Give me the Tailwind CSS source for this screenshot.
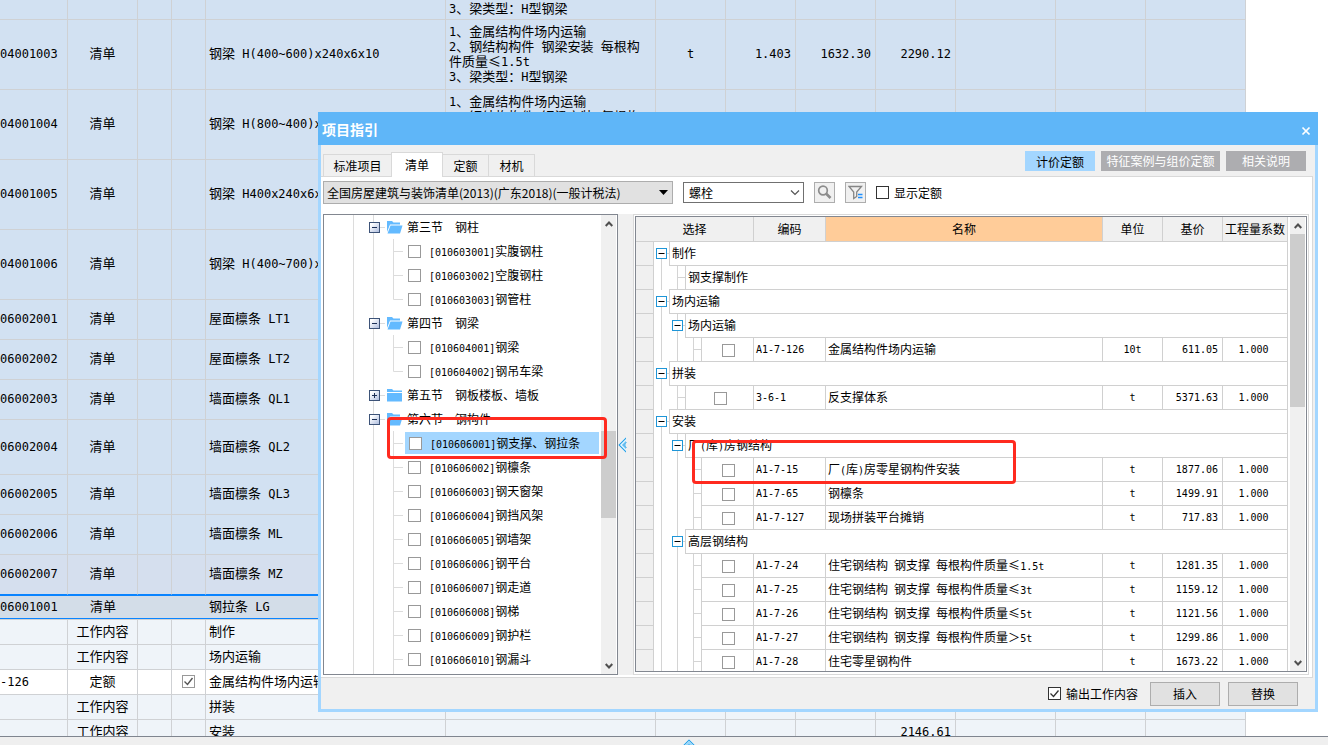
<!DOCTYPE html>
<html lang="zh-CN">
<head>
<meta charset="utf-8">
<meta name="viewport" content="width=device-width, initial-scale=1">
<title>项目指引</title>
<script src="https://cdn.jsdelivr.net/npm/@tailwindcss/browser@4"></script>
</head>
<body class="relative flex h-screen flex-col overflow-hidden bg-white font-['Noto_Sans_CJK_SC',sans-serif] text-xs text-black">

<!-- Bill of quantities -->
<main class="min-h-0 flex-1 overflow-hidden">
  <table class="w-[1246px] table-fixed border-separate border-spacing-0 text-[13px] leading-[15px]">
    <colgroup>
      <col class="w-[68px]"><col class="w-[70px]"><col class="w-[34px]"><col class="w-[34px]"><col class="w-[240px]"><col class="w-[210px]"><col class="w-[70px]"><col class="w-[70px]"><col class="w-[80px]"><col class="w-[80px]"><col class="w-[100px]"><col class="w-[90px]"><col class="w-[100px]">
    </colgroup>
    <tbody id="bill"></tbody>
  </table>
</main>
<div class="flex h-[9px] shrink-0 justify-center overflow-hidden border-t border-[#7f858f] bg-[#efefef] pr-[50px] pl-[100px]">
  <svg class="mt-[2px] h-[10px] w-[12px] shrink-0" viewBox="0 0 12 10" fill="none" aria-hidden="true"><path d="M6 0L0 6v4h12V6z" fill="#9bd6f8"/><path d="M.5 6.500L6 1l5.500 5.500M3 8.500l3-3 3 3" stroke="#2fa3e6"/></svg>
</div>

<!-- Guide dialog -->
<section role="dialog" aria-labelledby="dlg-title" class="absolute top-[112px] right-[10px] bottom-[33px] left-[318px] flex flex-col bg-[#f0f0f0]">
  <header class="flex h-[33px] shrink-0 items-center justify-between bg-[#5fb6f8] pr-[7px] pl-1 text-white">
    <h1 id="dlg-title" class="text-sm font-bold">项目指引</h1>
    <button type="button" aria-label="关闭" class="pt-1"><svg class="h-[10px] w-[10px]" viewBox="0 0 10 10" aria-hidden="true"><path d="M1.5 1.5l7 7M8.5 1.5l-7 7" stroke="#fff" stroke-width="1.700"/></svg></button>
  </header>

  <div class="flex min-h-0 flex-1 flex-col border-x-[3px] border-b-[3px] border-[#a3d6ff]">
    <div class="flex h-[31px] shrink-0 items-end justify-between pr-[9px] pl-[2px]">
      <div class="flex items-end" role="tablist">
        <button type="button" role="tab" class="h-[22px] w-[68px] border border-r-0 border-b-0 border-[#d9d9d9]">标准项目</button>
        <button type="button" role="tab" aria-selected="true" class="z-10 -mb-px h-[25px] w-[52px] border border-b-0 border-[#d9d9d9] bg-white">清单</button>
        <button type="button" role="tab" class="h-[22px] w-[46px] border-t border-r border-[#d9d9d9]">定额</button>
        <button type="button" role="tab" class="h-[22px] w-[46px] border-t border-r border-[#d9d9d9]">材机</button>
      </div>
      <div class="mb-[5px] flex gap-[6px]">
        <button type="button" class="h-5 w-[70px] bg-[#a3d6ff] pt-px">计价定额</button>
        <button type="button" class="h-5 w-[119px] bg-[#adadb0] text-white">特征案例与组价定额</button>
        <button type="button" class="h-5 w-[80px] bg-[#adadb0] text-white">相关说明</button>
      </div>
    </div>

    <div class="mr-[2px] flex min-h-0 flex-1 flex-col border-t border-r border-b border-[#d9d9d9] bg-white pt-1">
      <!-- Filter bar -->
      <div class="flex h-[23px] shrink-0 items-center pl-[2px]">
        <div class="relative h-[23px] w-[350px]">
          <select aria-label="清单库" class="h-full w-full appearance-none border border-[#adadad] bg-[#e1e1e1] pl-[3px]"><option>全国房屋建筑与装饰清单(2013)(广东2018)(一般计税法)</option></select>
          <svg class="pointer-events-none absolute top-[9px] right-[5px] h-[5px] w-[9px]" viewBox="0 0 9 5" aria-hidden="true"><path d="M0 0h9L4.500 5z"/></svg>
        </div>
        <div class="ml-[10px] flex h-[21px] w-[121px] items-center border border-[#707070] bg-white pr-[3px]">
          <input type="text" aria-label="搜索内容" value="螺栓" class="min-w-0 flex-1 pl-[5px] outline-none">
          <button type="button" aria-label="展开"><svg class="h-[6px] w-[10px]" viewBox="0 0 10 6" fill="none" aria-hidden="true"><path d="M1 .5l4 4 4-4" stroke="#555" stroke-width="1.200"/></svg></button>
        </div>
        <button type="button" aria-label="搜索" class="ml-[10px] grid h-[21px] w-[21px] place-items-center border border-[#adadad] bg-[#f0f0f0]"><svg class="h-[15px] w-[15px]" viewBox="0 0 15 15" fill="none" aria-hidden="true"><circle cx="6" cy="5.500" r="4.300" stroke="#8c8c8c" stroke-width="1.700"/><path d="M9 8.500l4.500 4.500" stroke="#8c8c8c" stroke-width="2.600"/></svg></button>
        <button type="button" aria-label="筛选" class="ml-[10px] grid h-[21px] w-[21px] place-items-center border border-[#adadad] bg-[#f0f0f0]"><svg class="h-[15px] w-[15px]" viewBox="0 0 15 15" fill="none" aria-hidden="true"><path d="M1 1.500h12.500L8.700 7v4.500l-3 2V7z" stroke="#858585" stroke-width="1.300"/><path d="M10 9.500h4.500M10 12.500h4.500" stroke="#1e90ff" stroke-width="1.500"/></svg></button>
        <label class="ml-[10px] flex items-center gap-[5px]"><input type="checkbox" class="h-[13px] w-[13px] appearance-none border border-[#333] bg-white">显示定额</label>
      </div>

      <div class="mt-[10px] mb-[2px] flex min-h-0 flex-1 pl-[2px]">
        <!-- Bill tree -->
        <div class="flex w-[295px] shrink-0 overflow-hidden border border-[#828790]">
          <ul id="tree" role="tree" class="flex min-w-0 flex-1 flex-col overflow-hidden"></ul>
          <div class="mr-px flex w-[15px] flex-col items-center bg-[#f0f0f0]">
            <svg class="mt-[6px] h-[6px] w-[8px] shrink-0" viewBox="0 0 8 6" fill="none" aria-hidden="true"><path d="M.7 5L4 1.500 7.300 5" stroke="#505050" stroke-width="2"/></svg>
            <div class="mt-[204px] h-[87px] w-full shrink-0 bg-[#cdcdcd]"></div>
            <svg class="mt-auto mb-[5px] h-[6px] w-[8px] shrink-0" viewBox="0 0 8 6" fill="none" aria-hidden="true"><path d="M.7 1L4 4.500 7.300 1" stroke="#505050" stroke-width="2"/></svg>
          </div>
        </div>
        <!-- Splitter -->
        <div class="w-[15px] shrink-0 bg-[#f0f0f0] pt-[223px]">
          <svg class="h-4 w-[9px]" viewBox="0 0 9 16" fill="none" aria-hidden="true"><path d="M8 0v16L0 8z" fill="#9bd6f8"/><path d="M8 1L1 8l7 7M8.500 5l-3 3 3 3" stroke="#2fa3e6"/><path d="M8 3L3 8l5 5" stroke="#e6f5fd"/></svg>
        </div>
        <!-- Quota table -->
        <div class="mr-[3px] flex min-w-0 flex-1 border border-[#d9d9d9] bg-white p-px">
          <div class="mb-px flex min-w-0 flex-1 border border-[#828790]">
            <div class="min-w-0 flex-1 overflow-hidden">
              <table class="w-full table-fixed border-separate border-spacing-0">
                <colgroup><col class="w-[18px]"><col class="w-[100px]"><col class="w-[72px]"><col><col class="w-[60px]"><col class="w-[60px]"><col class="w-[65px]"></colgroup>
                <thead>
                  <tr class="h-[25px] bg-[#f0f0f0] *:border-r *:border-b *:border-[#d0d0d0] *:p-0 *:font-normal *:whitespace-nowrap">
                    <th colspan="2">选择</th><th>编码</th><th class="bg-[#ffcc99]">名称</th><th>单位</th><th>基价</th><th>工程量系数</th>
                  </tr>
                </thead>
                <tbody id="quota"></tbody>
              </table>
            </div>
            <div class="mr-px ml-[2px] flex w-[15px] flex-col items-center bg-[#f0f0f0]">
              <svg class="mt-[6px] h-[6px] w-[8px] shrink-0" viewBox="0 0 8 6" fill="none" aria-hidden="true"><path d="M.7 5L4 1.500 7.300 5" stroke="#505050" stroke-width="2"/></svg>
              <div class="mt-[5px] h-[173px] w-full shrink-0 bg-[#cdcdcd]"></div>
              <svg class="mt-auto mb-[5px] h-[6px] w-[8px] shrink-0" viewBox="0 0 8 6" fill="none" aria-hidden="true"><path d="M.7 1L4 4.500 7.300 1" stroke="#505050" stroke-width="2"/></svg>
            </div>
          </div>
        </div>
      </div>
    </div>

    <footer class="flex h-[31px] shrink-0 items-center justify-end gap-2 pr-[17px]">
      <label class="mr-1 flex items-center gap-[5px]">
        <span class="grid *:col-start-1 *:row-start-1"><input type="checkbox" checked class="h-[13px] w-[13px] appearance-none border border-[#333] bg-white"><svg class="pointer-events-none h-[13px] w-[13px]" viewBox="0 0 13 13" fill="none" aria-hidden="true"><path d="M2.500 6.500l3 3L10.500 3.500" stroke="#333" stroke-width="1.300"/></svg></span>输出工作内容
      </label>
      <button type="button" class="h-6 w-[70px] border border-[#adadad] bg-[#e1e1e1]">插入</button>
      <button type="button" class="h-6 w-[70px] border border-[#adadad] bg-[#e1e1e1]">替换</button>
    </footer>
  </div>

  <!-- Highlight frames -->
  <div class="pointer-events-none absolute top-[305px] left-[69px] z-20 h-[42px] w-[220px] rounded-[4px] border-[3px] border-[#ff2a1f]"></div>
  <div class="pointer-events-none absolute top-[328px] left-[374px] z-20 h-[44px] w-[324px] rounded-[4px] border-[3px] border-[#ff2a1f]"></div>
</section>

<script>
const mixed = (s, cls) => s.replace(/[\x20-\x7e]+/g, m => `<span class="${cls}">${m}</span>`);
const big = s => mixed(s, "font-['DejaVu_Sans_Mono',monospace] text-xs leading-none whitespace-pre");
const small = s => mixed(s, "font-['DejaVu_Sans_Mono',monospace] text-[10px] leading-none whitespace-pre");

/* Bill of quantities: [height, colour, code, type, name, feature lines, unit, qty, price, total] */
const B = 'bg-[#d2e1f2]', W = 'bg-[#eff4f9]';
const feat = ['1、金属结构件场内运输', '2、钢结构构件 钢梁安装 每根构', '件质量≤1.5t', '3、梁类型：H型钢梁'];
const bill = [
  ['h-[20px]', B, '', '', '', feat.slice(3)],
  ['h-[70px]', B, '04001003', '清单', '钢梁 H(400~600)x240x6x10', feat, 't', '1.403', '1632.30', '2290.12'],
  ['h-[70px]', B, '04001004', '清单', '钢梁 H(800~400)x', feat],
  ['h-[70px]', B, '04001005', '清单', '钢梁 H400x240x6x'],
  ['h-[70px]', B, '04001006', '清单', '钢梁 H(400~700)x'],
  ['h-[40px]', B, '06002001', '清单', '屋面檩条 LT1'],
  ['h-[40px]', B, '06002002', '清单', '屋面檩条 LT2'],
  ['h-[40px]', B, '06002003', '清单', '墙面檩条 QL1'],
  ['h-[55px]', B, '06002004', '清单', '墙面檩条 QL2'],
  ['h-[40px]', B, '06002005', '清单', '墙面檩条 QL3'],
  ['h-[40px]', B, '06002006', '清单', '墙面檩条 ML'],
  ['h-[40px]', 'bg-[#d5dfee]', '06002007', '清单', '墙面檩条 MZ'],
  ['h-[24px]', 'bg-[#d3dde8]', '06001001', '清单', '钢拉条 LG'],
  ['h-[26px]', W, '', '工作内容', '制作'],
  ['h-[25px]', W, '', '工作内容', '场内运输'],
  ['h-[25px]', 'bg-white', '-126', '定额', '金属结构件场内运输'],
  ['h-[25px]', W, '', '工作内容', '拼装'],
  ['h-[25px]', W, '', '工作内容', '安装', null, '', '', '', '2146.61'],
];
document.getElementById('bill').innerHTML = bill.map((r, i) => {
  const [h, bg, code, type, name, lines, unit = '', qty = '', price = '', total = ''] = r;
  let line = 'border-r border-b border-[#cfd1d4]';
  if (i === 11) line = 'border-r border-b border-r-[#cfd1d4] border-b-[#0a84ff]';
  if (i === 12) line = 'border-y border-[#0a84ff]';
  if (i === 13) line = 'border-t border-r border-b border-[#cfd1d4]';
  const td = (c, t) => `<td class="${line} ${c} overflow-hidden pt-0 pb-1 whitespace-nowrap">${t ? `<div class="${c.includes('lines') ? '' : 'h-[15px]'}">${t}</div>` : ''}</td>`;
  const tick = name === '金属结构件场内运输'
    ? `<span class="grid justify-center pt-[2px] *:col-start-1 *:row-start-1"><input type="checkbox" checked aria-label="${name}" class="h-[13px] w-[13px] appearance-none border border-[#999] bg-white"><svg class="h-[13px] w-[13px]" viewBox="0 0 13 13" fill="none" aria-hidden="true"><path d="M2.500 6.500l3 3L10.500 3" stroke="#555" stroke-width="1.400"/></svg></span>` : '';
  return `<tr class="${h} ${bg}">` + td('px-0', big(code)) + td('px-0 text-center', type) + td('px-0', '') + td('px-0', tick)
    + td('pl-[3px]', name && `<div class="w-0">${big(name)}</div>`)
    + td('lines pl-[3px]', lines ? lines.map(l => `<div class="h-[15px]">${big(l)}</div>`).join('') : '')
    + td('px-0 text-center', big(unit)) + td('pr-1 text-right', big(qty)) + td('pr-1 text-right', big(price)) + td('pr-1 text-right', big(total))
    + td('px-0', '') + td('px-0', '') + td('px-0', '') + '</tr>';
}).join('');

/* Bill tree */
const nodes = [
  ['open', '第三节　钢柱'], ['', '[010603001]实腹钢柱'], ['', '[010603002]空腹钢柱'], ['last', '[010603003]钢管柱'],
  ['open', '第四节　钢梁'], ['', '[010604001]钢梁'], ['last', '[010604002]钢吊车梁'],
  ['closed', '第五节　钢板楼板、墙板'], ['open', '第六节　钢构件'],
  ['sel', '[010606001]钢支撑、钢拉条'], ['', '[010606002]钢檩条'], ['', '[010606003]钢天窗架'], ['', '[010606004]钢挡风架'],
  ['', '[010606005]钢墙架'], ['', '[010606006]钢平台'], ['', '[010606007]钢走道'], ['', '[010606008]钢梯'], ['', '[010606009]钢护栏'], ['', '[010606010]钢漏斗'],
];
const rails = '<path d="M29.500 0v24M49.500 0v24" stroke="#dcdcdc"/>';
document.getElementById('tree').innerHTML = `<svg width="0" height="0" class="absolute" aria-hidden="true"><defs><linearGradient id="bx" x2="1" y2="1"><stop offset=".2" stop-color="#fff"/><stop offset="1" stop-color="#a9b9dc"/></linearGradient></defs></svg>` + nodes.map(([k, t]) => {
  if (k === 'open' || k === 'closed') {
    const folder = k === 'open'
      ? '<path d="M63 17V6h5l1.500 1.500H76v2H66z" fill="#63baff"/><path d="M66.500 10.500H78.500L76 18.500H63.500z" fill="#63baff"/>'
      : '<path d="M63 6h5l1.500 1.500H78V9H63zM63 10h15v8.500H63z" fill="#63baff"/>';
    return `<li role="treeitem" class="flex h-6 shrink-0 items-center gap-1"><svg class="h-6 w-[79px] shrink-0" viewBox="0 0 79 24" fill="none" aria-hidden="true">${rails}<path d="M56 12.500h5" stroke="#dcdcdc"/><rect x="45.500" y="7.500" width="10" height="10" fill="url(#bx)" stroke="#3d5378"/><path d="M48 12.500h5${k === 'closed' ? 'M50.500 10v5' : ''}" stroke="#1c2f55"/>${folder}</svg>${t}</li>`;
  }
  const arm = k === 'last' ? 'M69.500 0v12.500h9.500' : 'M69.500 0v24M69.500 12.500h9.500';
  const sel = k === 'sel';
  return `<li role="treeitem" class="flex h-6 shrink-0 items-center"><svg class="h-6 w-[81px] shrink-0" viewBox="0 0 81 24" fill="none" aria-hidden="true">${rails}<path d="${arm}" stroke="#dcdcdc"/></svg><label class="flex h-[22px] items-center gap-2 whitespace-nowrap ${sel ? 'mr-[2px] flex-1 bg-[#a3d6ff] pl-1' : 'pl-[3px]'}"><input type="checkbox" class="h-[13px] w-[13px] shrink-0 appearance-none border border-[#999] bg-white"><span>${small(t)}</span></label></li>`;
}).join('') + `<li role="none" class="h-[3px] overflow-hidden"><svg class="h-6 w-[81px]" viewBox="0 0 81 24" fill="none" aria-hidden="true">${rails}<path d="M69.500 0v24" stroke="#dcdcdc"/></svg></li>`;

/* Quota rows: g0/g1 are group levels, t1 is plain text, l1/l2 are selectable items */
const quota = [
  ['g0', '制作'], ['t1', '钢支撑制作'], ['g0', '场内运输'], ['g1', '场内运输'], ['l2', '金属结构件场内运输', 'A1-7-126', '10t', '611.05'],
  ['g0', '拼装'], ['l1', '反支撑体系', '3-6-1', 't', '5371.63'], ['g0', '安装'], ['g1', '厂(库)房钢结构'],
  ['l2', '厂(库)房零星钢构件安装', 'A1-7-15', 't', '1877.06'], ['l2', '钢檩条', 'A1-7-65', 't', '1499.91'], ['l2', '现场拼装平台摊销', 'A1-7-127', 't', '717.83'],
  ['g1', '高层钢结构'], ['l2', '住宅钢结构 钢支撑 每根构件质量≤1.5t', 'A1-7-24', 't', '1281.35'], ['l2', '住宅钢结构 钢支撑 每根构件质量≤3t', 'A1-7-25', 't', '1159.12'],
  ['l2', '住宅钢结构 钢支撑 每根构件质量≤5t', 'A1-7-26', 't', '1121.56'], ['l2', '住宅钢结构 钢支撑 每根构件质量＞5t', 'A1-7-27', 't', '1299.86'], ['l2', '住宅零星钢构件', 'A1-7-28', 't', '1673.22'],
];
const guides = {
  g0: ['w-[15px]', 15, 'M7.500 12v12M13 11.500h2', 2.5],
  g1: ['w-[31px]', 31, 'M7.500 0v24M23.500 0v24M29 11.500h2', 18.5],
  t1: ['w-[31px]', 31, 'M7.500 0v24M23.500 0v24M23.500 11.500h8'],
  l1: ['w-[31px]', 31, 'M7.500 0v24M23.500 0v24M23.500 11.500h8'],
  l2: ['w-[47px]', 47, 'M7.500 0v24M23.500 0v24M39.500 0v24M39.500 11.500h8'],
};
document.getElementById('quota').innerHTML = quota.map(([k, name, code, unit, price]) => {
  const [cls, w, d, bx] = guides[k];
  const svg = `<svg class="h-6 shrink-0 ${cls}" viewBox="0 0 ${w} 24" fill="none" aria-hidden="true"><path d="${d}" stroke="#d4d4d4"/>${bx ? `<rect x="${bx}" y="6.500" width="10" height="10" fill="#fff" stroke="#1e96d8"/><path d="M${bx + 2} 11.500h6" stroke="#000"/>` : ''}</svg>`;
  const head = '<td class="border-r border-b border-[#d0d0d0] bg-[#f0f0f0] p-0"></td>';
  const box = c => `-mt-px flex h-[25px] min-w-0 flex-1 items-center border-y border-l border-[#d0d0d0] ${c}`;
  if (!code) return `<tr class="h-6">${head}<td colspan="6" class="border-r border-[#d0d0d0] p-0"><div class="flex h-6">${svg}<div class="${box('pb-[2px] pl-[2px]')}"><span>${small(name)}</span></div></div></td></tr>`;
  const td = (c, t) => `<td class="overflow-hidden border-r border-b border-[#d0d0d0] p-0 whitespace-nowrap ${c}"><div class="h-[23px]">${small(t)}</div></td>`;
  return `<tr class="h-6">${head}<td class="border-r border-[#d0d0d0] p-0"><div class="flex h-6">${svg}<div class="${box('justify-center pt-[2px] pl-px')}"><input type="checkbox" aria-label="${name}" class="h-[13px] w-[13px] appearance-none border border-[#999] bg-white"></div></div></td>`
    + td('pl-[2px] leading-5', code) + td('pl-[2px] leading-[21px]', name) + td('text-center leading-5', unit) + td('pr-1 text-right leading-5', price) + td('pr-[3px] text-center leading-5', '1.000') + '</tr>';
}).join('');
</script>
</body>
</html>
